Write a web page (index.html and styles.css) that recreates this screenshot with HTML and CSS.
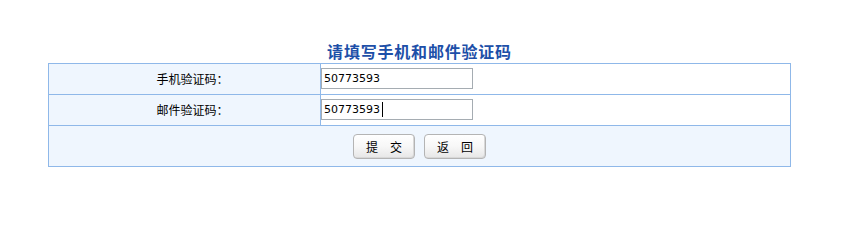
FILE: index.html
```html
<!DOCTYPE html>
<html lang="zh-CN">
<head>
<meta charset="utf-8">
<title>请填写手机和邮件验证码</title>
<link rel="stylesheet" href="styles.css">
</head>
<body>
<div class="page">
  <h1 class="title">请填写手机和邮件验证码</h1>
  <div class="form">
    <div class="row">
      <div class="label">手机验证码：</div>
      <div class="field"><input class="input" type="text" value="50773593"></div>
    </div>
    <div class="row">
      <div class="label">邮件验证码：</div>
      <div class="field"><input class="input" type="text" value="50773593"><span class="caret"></span></div>
    </div>
    <div class="actions">
      <button class="btn" type="button">提　交</button>
      <button class="btn" type="button">返　回</button>
    </div>
  </div>
</div>
</body>
</html>
```
FILE: styles.css
```css
html, body {
  margin: 0;
  padding: 0;
  background: #ffffff;
}
.page {
  padding-top: 40px;
  padding-left: 48px;
  font-family: "Noto Sans CJK SC", "DejaVu Sans", sans-serif;
  font-size: 12px;
  color: #000;
}
.title {
  width: 743px;
  margin: 0;
  height: 23px;
  line-height: 23px;
  text-align: center;
  font-size: 16px;
  font-weight: bold;
  letter-spacing: 0.8px;
  color: #1d4fa8;
}
.form {
  width: 743px;
  box-sizing: border-box;
  border: 1px solid #8fb8e9;
}
.row {
  display: flex;
  height: 31px;
  box-sizing: border-box;
  border-bottom: 1px solid #8fb8e9;
}
.label {
  width: 272px;
  box-sizing: border-box;
  padding-left: 16px;
  border-right: 1px solid #8fb8e9;
  background: #eff6fe;
  display: flex;
  align-items: center;
  justify-content: center;
  line-height: 14px;
}
.field {
  flex: 1;
  background: #ffffff;
  display: flex;
  align-items: flex-start;
  padding-top: 4px;
  position: relative;
}
.input {
  width: 152px;
  height: 21px;
  box-sizing: border-box;
  margin: 0;
  padding: 0 2px;
  border: 1px solid #a5acb2;
  font-family: "DejaVu Sans", sans-serif;
  font-size: 11px;
  color: #000;
  background: #fff;
  outline: none;
}
.caret {
  position: absolute;
  left: 61px;
  top: 7px;
  width: 1px;
  height: 15px;
  background: #000;
}
.actions {
  height: 40px;
  background: #eff6fe;
  display: flex;
  align-items: center;
  justify-content: center;
  gap: 9px;
}
.btn {
  width: 62px;
  height: 25px;
  margin: 0;
  padding: 0;
  border: 1px solid #b4b4b4;
  border-radius: 4px;
  background: linear-gradient(to bottom, #ffffff 0%, #f7f7f7 50%, #e6e6e6 100%);
  box-shadow: inset -1px -1px 0 #d8d8d8;
  font-family: "Noto Sans CJK SC", sans-serif;
  font-size: 12px;
  color: #000;
  line-height: 23px;
  text-align: center;
}
```
